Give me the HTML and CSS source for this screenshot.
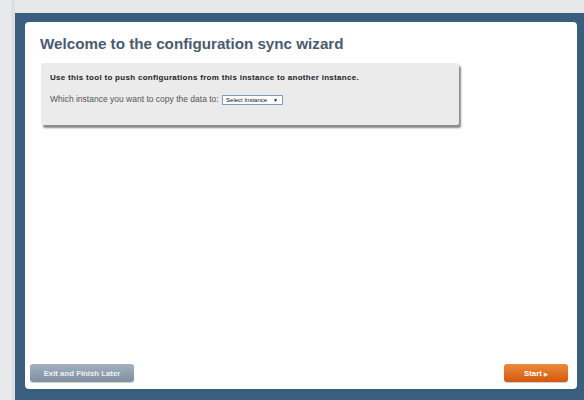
FILE: index.html
```html
<!DOCTYPE html>
<html>
<head>
<meta charset="utf-8">
<link rel="stylesheet" href="styles.css">
</head>
<body>
<div class="page">
  <div class="frame">
    <div class="panel">
      <h1 class="title">Welcome to the configuration sync wizard</h1>
      <div class="infobox">
        <p class="lead">Use this tool to push configurations from this instance to another instance.</p>
        <p class="question">Which instance you want to copy the data to: <span class="select">Select Instance <span class="caret">&#9660;</span></span></p>
      </div>
      <div class="spacer"></div>
      <div class="actions">
        <button class="btn btn-exit">Exit and Finish Later</button>
        <button class="btn btn-start">Start <span class="arrow">&#9654;</span></button>
      </div>
    </div>
  </div>
</div>
</body>
</html>
```
FILE: styles.css
```css
html, body {
  margin: 0;
  padding: 0;
  height: 100%;
}
body {
  background: #e6e8ea;
  font-family: "Liberation Sans", Arial, sans-serif;
  overflow: hidden;
}
.page {
  height: 400px;
  padding: 13px 0 0 15px;
  box-sizing: border-box;
  background: linear-gradient(to right, #e7e9eb 0, #e7e9eb 11px, #dcdfe2 12px, #dcdfe2 15px, #e6e8ea 15px);
}
.frame {
  height: 100%;
  box-sizing: border-box;
  background: #3b5e7f;
  padding: 9px 7px 11px 10px;
  display: flex;
}
.panel {
  flex: 1;
  background: #ffffff;
  border-radius: 4px;
  display: flex;
  flex-direction: column;
  padding: 12px 9px 7px 5px;
}
.title {
  margin: 0 0 0 10px;
  font-size: 15.2px;
  font-weight: bold;
  color: #4a5a6f;
  line-height: 20px;
}
.infobox {
  margin: 9px 0 0 11px;
  width: 418px;
  height: 62px;
  box-sizing: border-box;
  background: #ebebeb;
  border-radius: 2px;
  box-shadow: 2px 3px 2px #8a8a8a;
  padding: 9px 9px;
}
.lead {
  margin: 0;
  font-size: 8px;
  font-weight: bold;
  color: #222;
  letter-spacing: 0.3px;
  line-height: 11px;
}
.question {
  margin: 10px 0 0 0;
  font-size: 8.5px;
  color: #555;
  line-height: 12px;
}
.select {
  display: inline-block;
  border: 1px solid #7f9db9;
  background: #fff;
  font-size: 6px;
  color: #111;
  line-height: 8px;
  padding: 0 3px;
  width: 61px;
  height: 10px;
  box-sizing: border-box;
  vertical-align: middle;
  position: relative;
  margin-left: 1px;
}
.caret {
  position: absolute;
  right: 4px;
  font-size: 5px;
}
.spacer {
  flex: 1;
}
.actions {
  display: flex;
  justify-content: space-between;
  align-items: center;
}
.btn {
  border: none;
  border-radius: 3px;
  height: 18px;
  font-family: "Liberation Sans", Arial, sans-serif;
  font-size: 7.8px;
  font-weight: bold;
  color: #fff;
  padding: 0;
}
.btn-exit {
  width: 104px;
  background: linear-gradient(#a3b1bf, #7e8fa0);
  color: #eef1f4;
  box-shadow: 0 1px 1px rgba(0,0,0,0.2);
}
.btn-start {
  width: 64px;
  background: linear-gradient(#ec8a3c, #d4580f);
  box-shadow: 0 1px 1px rgba(0,0,0,0.2);
}
.arrow {
  font-size: 5px;
}
```
